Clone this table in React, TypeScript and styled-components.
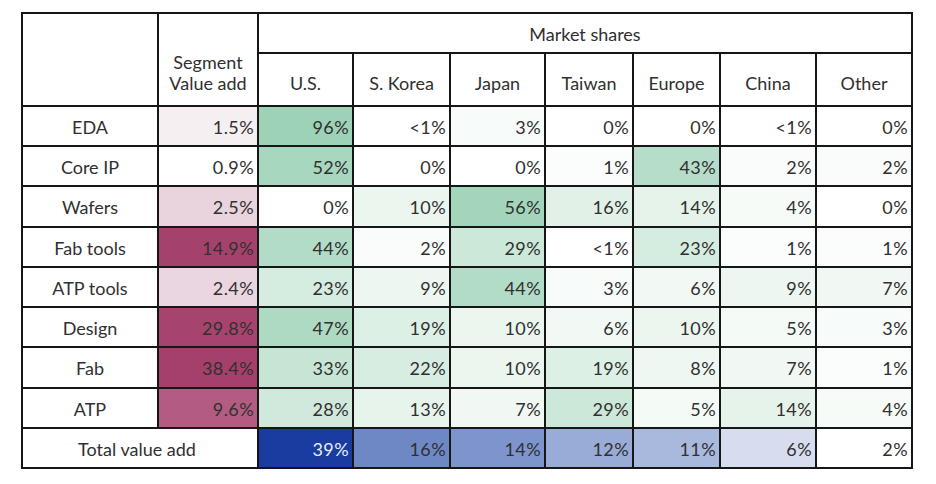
import React from "react";
import styled, { createGlobalStyle } from "styled-components";

const Global = createGlobalStyle`
  html, body { margin: 0; padding: 0; background: #ffffff; }
  body { font-family: Lato, "Open Sans", "Liberation Sans", sans-serif; color: #303030; }
`;

const Grid = styled.div`
  display: grid;
  grid-template-columns: 134px 98px 93px 95px 93px 86px 85px 94px 94px;
  grid-template-rows: 38px 51px 38px 38px 39px 38px 38px 38px 39px 38px 38px;
  gap: 2px;
  padding: 2px;
  background: #161616;
  width: fit-content;
  margin: 12px 0 0 21px;
`;

const Cell = styled.div<{ $bg?: string; $fg?: string }>`
  background: ${(p) => p.$bg || "#ffffff"};
  color: ${(p) => p.$fg || "#303030"};
  font-size: 18px;
  display: flex;
  align-items: center;
  box-sizing: border-box;
`;

const Corner = styled(Cell)`
  grid-row: 1 / span 2;
`;

const SegmentHead = styled(Cell)`
  grid-row: 1 / span 2;
  flex-direction: column;
  justify-content: flex-end;
  align-items: center;
  text-align: center;
  line-height: 21px;
  padding-bottom: 11px;
`;

const MarketHead = styled(Cell)`
  grid-column: 3 / span 7;
  justify-content: center;
  padding-top: 2px;
`;

const ColHead = styled(Cell)`
  justify-content: center;
  align-items: flex-end;
  padding-bottom: 11px;
`;

const RowLabel = styled(Cell)`
  justify-content: center;
  padding-top: 1px;
`;

const TotalLabel = styled(Cell)`
  grid-column: 1 / span 2;
  justify-content: center;
  padding: 1px 6px 0 0;
`;

const Value = styled(Cell)`
  justify-content: flex-end;
  padding: 1px 3px 0 0;
  letter-spacing: 0.4px;
`;

const greenScale: Record<string, string> = {
  "96%": "#9dd2b6",
  "56%": "#a3d5bb",
  "52%": "#a7d7be",
  "47%": "#aedac4",
  "44%": "#b2dcc7",
  "43%": "#b5ddc9",
  "33%": "#c6e5d5",
  "29%": "#cce8d9",
  "28%": "#d0e9dc",
  "23%": "#d5ece0",
  "22%": "#d7ede1",
  "19%": "#ddf0e5",
  "16%": "#e1f1e8",
  "14%": "#e5f3eb",
  "13%": "#e7f4ec",
  "10%": "#ebf6ef",
  "9%": "#edf6f0",
  "8%": "#eff7f2",
  "7%": "#f1f8f3",
  "6%": "#f2f9f5",
  "5%": "#f4faf6",
  "4%": "#f6fbf8",
  "3%": "#f7fbf9",
  "2%": "#f9fcfa",
  "1%": "#fbfdfc",
  "<1%": "#ffffff",
  "0%": "#ffffff",
};

const segColor: Record<string, string> = {
  "1.5%": "#f6eff2",
  "0.9%": "#ffffff",
  "2.5%": "#e9d4de",
  "14.9%": "#a5426c",
  "2.4%": "#ead6e0",
  "29.8%": "#a6446d",
  "38.4%": "#a4406a",
  "9.6%": "#b25c81",
};

const totalColor: { v: string; bg: string; fg?: string }[] = [
  { v: "39%", bg: "#1a3b9f", fg: "#e8edf8" },
  { v: "16%", bg: "#6e88c6" },
  { v: "14%", bg: "#7d95cc" },
  { v: "12%", bg: "#99abd7" },
  { v: "11%", bg: "#a9b8dd" },
  { v: "6%", bg: "#d6ddee" },
  { v: "2%", bg: "#ffffff" },
];

const countries = ["U.S.", "S. Korea", "Japan", "Taiwan", "Europe", "China", "Other"];

const rows: { label: string; seg: string; shares: string[] }[] = [
  { label: "EDA", seg: "1.5%", shares: ["96%", "<1%", "3%", "0%", "0%", "<1%", "0%"] },
  { label: "Core IP", seg: "0.9%", shares: ["52%", "0%", "0%", "1%", "43%", "2%", "2%"] },
  { label: "Wafers", seg: "2.5%", shares: ["0%", "10%", "56%", "16%", "14%", "4%", "0%"] },
  { label: "Fab tools", seg: "14.9%", shares: ["44%", "2%", "29%", "<1%", "23%", "1%", "1%"] },
  { label: "ATP tools", seg: "2.4%", shares: ["23%", "9%", "44%", "3%", "6%", "9%", "7%"] },
  { label: "Design", seg: "29.8%", shares: ["47%", "19%", "10%", "6%", "10%", "5%", "3%"] },
  { label: "Fab", seg: "38.4%", shares: ["33%", "22%", "10%", "19%", "8%", "7%", "1%"] },
  { label: "ATP", seg: "9.6%", shares: ["28%", "13%", "7%", "29%", "5%", "14%", "4%"] },
];

export default function App() {
  return (
    <>
      <Global />
      <Grid>
        <Corner />
        <SegmentHead>
          <span>Segment</span>
          <span>Value add</span>
        </SegmentHead>
        <MarketHead>Market shares</MarketHead>
        {countries.map((c) => (
          <ColHead key={c}>{c}</ColHead>
        ))}
        {rows.map((r) => (
          <React.Fragment key={r.label}>
            <RowLabel>{r.label}</RowLabel>
            <Value $bg={segColor[r.seg]}>{r.seg}</Value>
            {r.shares.map((s, i) => (
              <Value key={i} $bg={greenScale[s]}>
                {s}
              </Value>
            ))}
          </React.Fragment>
        ))}
        <TotalLabel>Total value add</TotalLabel>
        {totalColor.map((t, i) => (
          <Value key={i} $bg={t.bg} $fg={t.fg}>
            {t.v}
          </Value>
        ))}
      </Grid>
    </>
  );
}
